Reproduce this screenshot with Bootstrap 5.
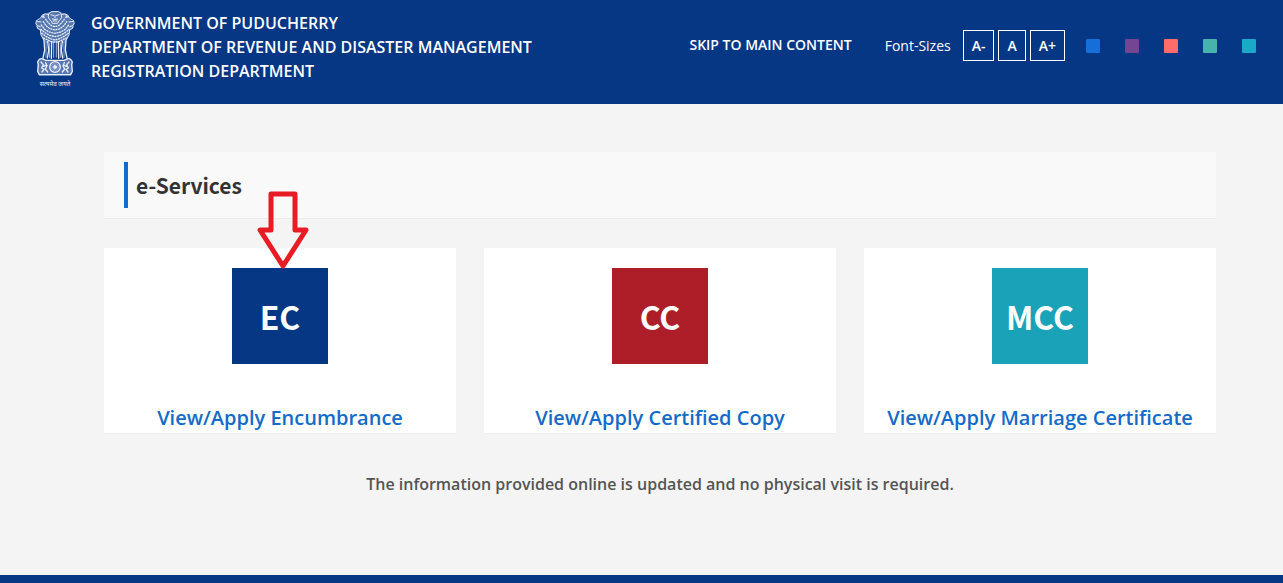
<!DOCTYPE html>
<html lang="en">
<head>
<meta charset="utf-8">
<meta name="viewport" content="width=device-width, initial-scale=1">
<title>e-Services - Registration Department</title>
<link href="https://cdn.jsdelivr.net/npm/bootstrap@5.3.0/dist/css/bootstrap.min.css" rel="stylesheet">
<style>
  :root { --navy: #063785; --link: #146bc8; }
  body { font-family: "Open Sans", "Noto Sans", sans-serif; background: #f4f4f4; }
  a { text-decoration: none; }
  .site-header { background: var(--navy); min-height: 104px; padding: 10px 27px 10px 35px; }
  .emblem { width: 40px; height: 78px; }
  .site-title { font-size: 16px; line-height: 24px; font-weight: 600; padding-top: 1px; }
  .tools { font-size: 14px; padding-top: 20px; }
  .skip { font-weight: 600; margin-right: 33px; padding-bottom: 2px; }
  .size-btn { height: 31px; padding: 0 8px; border: 1px solid #fff; background: transparent; color: #fff; font-size: 14px; font-weight: 600; }
  .swatches { gap: 25px; margin-left: 21px; }
  .swatch { width: 14px; height: 14px; border: 0; padding: 0; border-radius: 1px; }
  .page-main { padding: 48px 67px 48px 104px; }
  .title-bar { background: #f9f9f9; border-bottom: 1px solid #ececec; padding: 10px 20px; }
  .title-bar h1 { font-family: "Noto Sans CJK JP", sans-serif; font-size: 21px; line-height: 46px; font-weight: 700; color: #333; border-left: 4px solid #146bd2; padding-left: 8px; }
  .services { --bs-gutter-x: 28px; --bs-gutter-y: 28px; margin-top: 1px; }
  .service { background: #fff; padding-top: 20px; color: var(--link); font-size: 20px; line-height: 30px; font-weight: 600; border-bottom: 1px solid #efefef; }
  .tile { width: 96px; height: 96px; margin-bottom: 39px; color: #fff; font-family: "Noto Sans CJK JP", sans-serif; font-size: 32px; font-weight: 700; }
  .tile-ec { background: var(--navy); }
  .tile-cc { background: #ad1e28; }
  .tile-mcc { background: #19a2b8; }
  .pointer { width: 52px; height: 80px; top: -59px; left: 50%; margin-left: -23px; }
  .note { font-size: 16px; line-height: 24px; font-weight: 600; color: #555; margin-top: 38px; }
  .site-footer { background: var(--navy); height: 8px; }
</style>
</head>
<body class="d-flex flex-column min-vh-100">
<header class="site-header d-flex flex-wrap align-items-start justify-content-between text-white">
  <div class="d-flex align-items-start gap-3">
    <svg class="emblem flex-shrink-0" viewBox="30 30 120 234" role="img" aria-label="National emblem">
      <path fill="#b9c8e6" fill-opacity=".45" d="M68 38q22-10 44 0l16 6 8 16 13 10-4 14-13 8-3 22-11 14H62l-11-14-3-22-13-8-4-14 13-10 8-16zM38 184l10-10 14 6h56l14-6 10 10v30l-4 13H42l-4-13z"/>
      <g fill="none" stroke="#e8eefa" stroke-width="3" stroke-linecap="round" stroke-linejoin="round">
        <!-- centre lion -->
        <path d="M72 40q8-8 18-5q12-4 18 5l2 12q-3 8-8 10l-4 8h-16l-4-8q-7-4-8-11zM78 44l8 3M102 44l-8 3M90 46v8M82 57q8 5 16 0M84 63h12"/>
        <!-- side lions -->
        <path d="M70 43q-12-4-18 2l-6 10-12 7q-4 9 3 15l9 3M36 64l12 2M52 50l7 2M57 45l-3 8M110 43q12-4 18 2l6 10 12 7q4 9-3 15l-9 3M144 64l-12 2M128 50l-7 2M123 45l3 8M36 80q0 8 10 9l2 16 8 14M144 80q0 8-10 9l-2 16-8 14"/>
        <!-- manes -->
        <path stroke-width="4" stroke-dasharray="3 5" d="M62 58l8 10 9 9 11 3 11-3 9-9 8-10M55 65l8 12 12 9 15 4 15-4 12-9 8-12M49 75l10 13 14 8 17 4 17-4 14-8 10-13M48 88l12 10 14 8 16 4 16-4 14-8 12-10M50 100l13 9 13 7 14 4 14-4 13-7 13-9M56 114l12 6 13 6h18l13-6 12-6"/>
        <!-- legs -->
        <path stroke-width="4" d="M57 120l2 30-5 24M68 124l3 27-4 23M80 126l-1 49M100 126l1 49M112 124l-3 27 4 23M123 120l-2 30 5 24"/>
        <path stroke-width="2" d="M63 126v46M74 130l-1 42M86 130v42M94 130v42M106 130l1 42M117 126v46"/>
        <!-- abacus -->
        <path stroke-width="4" d="M38 186q5-12 13-10l12 5h54l12-5q8-2 13 10l-2 8 2 20-5 10H43l-5-10 2-20z"/>
        <circle cx="90" cy="201" r="16" stroke-width="4"/>
        <circle cx="90" cy="201" r="4" fill="#e8eefa"/>
        <path stroke-width="1" d="M90 187v28M76 201h28M80 191l20 20M80 211l20-20M85 188l10 26M95 188l-10 26M77 196l26 10M77 206l26-10"/>
        <path stroke-width="4" d="M48 186l7 8-5 10 7 4-6 8M62 188l4 9-5 10 7 9M56 199l8-4M132 186l-7 8 5 10-7 4 6 8M118 188l-4 9 5 10-7 9M124 199l-8-4"/>
      </g>
      <text x="90" y="257" text-anchor="middle" font-size="19" fill="#e8eefa" font-family="Noto Sans Devanagari, Noto Sans, sans-serif">सत्यमेव जयते</text>
    </svg>
    <div class="site-title">
      <div>GOVERNMENT OF PUDUCHERRY</div>
      <div>DEPARTMENT OF REVENUE AND DISASTER MANAGEMENT</div>
      <div>REGISTRATION DEPARTMENT</div>
    </div>
  </div>
  <div class="tools d-flex flex-wrap align-items-center">
    <a class="skip text-white" href="#main">SKIP TO MAIN CONTENT</a>
    <span class="me-2 pe-1">Font-Sizes</span>
    <div class="d-flex gap-1">
      <button type="button" class="size-btn">A-</button>
      <button type="button" class="size-btn">A</button>
      <button type="button" class="size-btn">A+</button>
    </div>
    <div class="swatches d-flex">
      <button type="button" class="swatch" style="background:#146fd9" aria-label="Blue theme"></button>
      <button type="button" class="swatch" style="background:#744593" aria-label="Purple theme"></button>
      <button type="button" class="swatch" style="background:#ff6c6b" aria-label="Coral theme"></button>
      <button type="button" class="swatch" style="background:#46b4ad" aria-label="Green theme"></button>
      <button type="button" class="swatch" style="background:#18aac6" aria-label="Teal theme"></button>
    </div>
  </div>
</header>
<main id="main" class="page-main">
  <div class="title-bar"><h1 class="mb-0">e-Services</h1></div>
  <div class="row services text-center">
    <div class="col-12 col-md-4">
      <a href="#ec" class="service position-relative d-flex flex-column align-items-center">
        <span class="tile tile-ec d-flex align-items-center justify-content-center">EC</span>
        View/Apply Encumbrance
        <svg class="pointer position-absolute" viewBox="0 0 52 80" aria-hidden="true"><path d="M14 5h24v36h11L26 77 3 41h11z" fill="none" stroke="#e81c24" stroke-width="5" stroke-linejoin="round"/></svg>
      </a>
    </div>
    <div class="col-12 col-md-4">
      <a href="#cc" class="service d-flex flex-column align-items-center">
        <span class="tile tile-cc d-flex align-items-center justify-content-center">CC</span>
        View/Apply Certified Copy
      </a>
    </div>
    <div class="col-12 col-md-4">
      <a href="#mcc" class="service d-flex flex-column align-items-center">
        <span class="tile tile-mcc d-flex align-items-center justify-content-center">MCC</span>
        View/Apply Marriage Certificate
      </a>
    </div>
  </div>
  <p class="note text-center mb-0">The information provided online is updated and no physical visit is required.</p>
</main>
<footer class="site-footer mt-auto"></footer>
<script src="https://cdn.jsdelivr.net/npm/bootstrap@5.3.0/dist/js/bootstrap.bundle.min.js"></script>
</body>
</html>
